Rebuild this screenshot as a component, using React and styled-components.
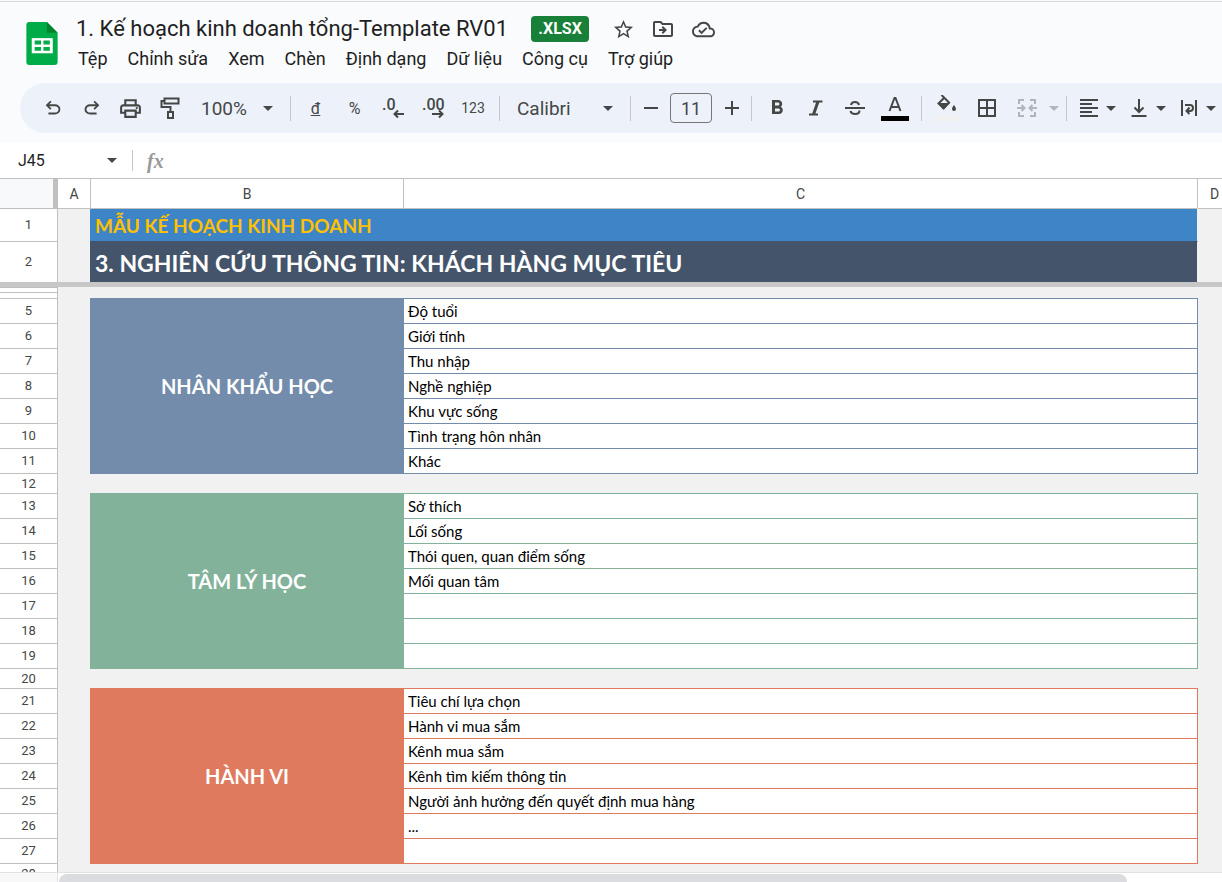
import React from "react";
import styled, { createGlobalStyle, css } from "styled-components";
import {
  MdStarBorder,
  MdOutlineDriveFileMove,
  MdOutlineCloudDone,
  MdFormatBold,
  MdBorderAll,
} from "react-icons/md";

const GlobalStyle = createGlobalStyle`
  *, *::before, *::after { box-sizing: border-box; }
  body { margin: 0; background: #fff; font-family: Roboto, "Liberation Sans", sans-serif; }
  button, input { font: inherit; color: inherit; }
`;

const ink = "#444746";
const line = "#c0c0c0";

const Page = styled.div`
  display: flex;
  flex-direction: column;
  height: 100vh;
  overflow: hidden;
`;

const Header = styled.header`
  flex: none;
  padding-bottom: 10px;
  background: #f9fbfd;
  border-top: 1px solid #f9fbfd;
  box-shadow: inset 0 1px 0 #d5d8dc;
`;

const TitleBar = styled.div`
  display: flex;
  padding: 13px 0 10px 26px;
  gap: 18px;
`;

const Logo = styled.svg`
  width: 32px;
  height: 43px;
  margin-top: 8px;
  flex: none;
`;

const TitleColumn = styled.div`
  min-width: 0;
  white-space: nowrap;
`;

const TitleRow = styled.div`
  display: flex;
  align-items: center;
  height: 30px;
  color: ${ink};
`;

const Title = styled.h1`
  margin: 0 23px 0 0;
  font-size: 22px;
  font-weight: 400;
  line-height: 30px;
  color: #1f1f1f;
`;

const Badge = styled.span`
  width: 58px;
  margin-right: 22px;
  border-radius: 4px;
  background: #188038;
  color: #fff;
  font-size: 16px;
  font-weight: 700;
  line-height: 26px;
  text-align: center;
`;

const TitleButton = styled.button`
  display: grid;
  place-items: center;
  width: 24px;
  height: 24px;
  margin-right: 16px;
  padding: 0;
  border: 0;
  background: none;
`;

const Menu = styled.nav`
  display: flex;
  gap: 20px;
  margin-top: 1px;
  padding-left: 2px;
`;

const MenuItem = styled.button`
  padding: 0;
  border: 0;
  background: none;
  color: #1f1f1f;
  font-size: 18px;
  line-height: 28px;
`;

const Toolbar = styled.div`
  display: flex;
  align-items: center;
  height: 50px;
  margin-left: 20px;
  padding-left: 13px;
  border-radius: 25px 0 0 25px;
  background: #edf2fa;
  color: ${ink};
  overflow: hidden;
`;

const Tool = styled.button`
  display: flex;
  align-items: center;
  justify-content: ${(p) => (p.$menu ? "space-between" : "center")};
  flex: none;
  width: ${(p) => p.$width || 39}px;
  height: 36px;
  padding: ${(p) => p.$pad || "0"};
  border: 0;
  background: none;
  opacity: ${(p) => (p.$faded ? 0.35 : 1)};
  font-size: ${(p) => p.$size || 16}px;

  svg { display: block; flex: none; }
`;

const Separator = styled.span`
  flex: none;
  width: 1px;
  height: 25px;
  margin: 0 5px;
  background: #c7c7c7;
`;

const SizeInput = styled.input`
  flex: none;
  width: 42px;
  height: 30px;
  margin: 0 5px;
  padding: 0;
  border: 1px solid #747775;
  border-radius: 4px;
  background: transparent;
  font-size: 18px;
  text-align: center;
`;

const Swatch = styled.span`
  display: flex;
  justify-content: center;
  align-items: flex-start;
  width: 28px;
  height: 26px;
  border-bottom: 5px solid ${(p) => p.$color};
`;

const FormulaBar = styled.div`
  display: flex;
  align-items: center;
  flex: none;
  height: 35px;
  padding-left: 18px;
`;

const NameBox = styled.input`
  width: 89px;
  padding: 0;
  border: 0;
  outline: 0;
  background: none;
  color: #1f1f1f;
  font-size: 16px;
`;

const NameButton = styled.button`
  display: flex;
  padding: 0;
  border: 0;
  background: none;
  color: ${ink};
`;

const BarDivider = styled.span`
  width: 1px;
  height: 21px;
  margin: 0 14px 0 15px;
  background: #c7c7c7;
`;

const Fx = styled.span`
  color: #999;
  font: italic 700 20px/24px "Liberation Serif", serif;
`;

const Grid = styled.main`
  flex: 1;
  min-height: 0;
  overflow: hidden;
  border-top: 1px solid ${line};
  background: #f1f1f1;
`;

/* Column D runs on past the right edge of the window. */
const Sheet = styled.table`
  width: calc(100% + 9px);
  table-layout: fixed;
  border-collapse: separate;
  border-spacing: 0;

  th, td { padding: 0; }
`;

const ColumnHead = styled.th`
  height: 29px;
  border: solid ${line};
  border-width: ${(p) => p.$lines || "0"};
  background: #fff;
  color: ${ink};
  font-size: 14px;
  font-weight: 400;
`;

const CornerHead = styled.td`
  border-right: 5px solid ${line};
  background: #f8f9fa;
`;

const RowHead = styled.th`
  height: ${(p) => p.$height}px;
  border-top: 1px solid ${line};
  border-right: 1px solid ${line};
  background: #fff;
  color: ${ink};
  font-size: 13px;
  font-weight: 400;
  line-height: ${(p) => (p.$height < 12 ? 0 : 16)}px;
`;

const Blank = styled.td`
  border-top: 1px solid ${(p) => p.$edge || "#f1f1f1"};
`;

const sheetFont = css`
  font-family: Lato, "Liberation Sans", sans-serif;
`;

const Banner = styled.td`
  ${sheetFont}
  border-top: 1px solid ${(p) => p.$edge};
  border-right: 1px solid #f1f1f1;
  background: ${(p) => p.$fill} padding-box;

  && { padding: 2px 0 0 5px; }

  color: ${(p) => p.$color};
  font-size: ${(p) => p.$size}px;
  font-weight: 700;
  line-height: 28px;
  white-space: nowrap;
`;

const FreezeBar = styled.td`
  height: 5px;
  background: #c7c7c7;
`;

const GroupCell = styled.td`
  ${sheetFont}
  background: ${(p) => p.$fill};
  color: #fff;
  font-size: 20px;
  font-weight: 700;
  text-align: center;
`;

const ItemCell = styled.td`
  ${sheetFont}
  border-top: 1px solid ${(p) => p.$edge};
  border-right: 1px solid ${(p) => p.$edge};
  background: #fff;
  color: #000;
  font-size: 15px;
  line-height: 20px;
  white-space: nowrap;

  && { padding: 0 0 0 4px; }
`;

const ScrollTrack = styled.div`
  display: flex;
  flex: none;
  height: 10px;
  border-top: 1px solid #e1e1e1;
  background: #fff;
`;

const ScrollCorner = styled.div`
  width: 58px;
  border-right: 1px solid #e1e1e1;
  background: #f8f8f8;
`;

const ScrollLane = styled.div`
  flex: 1;
  padding: 1px 95px 0 1px;
`;

const ScrollThumb = styled.div`
  height: 16px;
  border-radius: 8px;
  background: #dadce0;
`;

const Caret = () => (
  <svg width="10" height="5" viewBox="0 0 10 5" fill="currentColor" aria-hidden="true">
    <path d="M0 0h10L5 5z" />
  </svg>
);

const Symbol = ({ d, size = 20 }) => (
  <svg width={size} height={size} viewBox="0 -960 960 960" fill="currentColor" aria-hidden="true">
    <path d={d} />
  </svg>
);

const Stroke = ({ children, size = 24, width = 2 }) => (
  <svg width={size} height={size} viewBox={`0 0 ${size} ${size}`} fill="none" stroke="currentColor" strokeWidth={width} aria-hidden="true">
    {children}
  </svg>
);

const undoPath =
  "M280-200v-80h284q63 0 109.500-40T720-420q0-60-46.500-100T564-560H312l104 104-56 56-200-200 200-200 56 56-104 104h252q97 0 169.500 63T800-420q0 94-72.500 157T564-200H280Z";
const redoPath =
  "M396-200q-97 0-169.500-63T154-420q0-94 72.500-157T396-640h252L544-744l56-56 200 200-200 200-56-56 104-104H396q-63 0-109.500 40T240-420q0 60 46.500 100T396-280h284v80H396Z";
const printPath =
  "M640-640v-120H320v120h-80v-200h480v200h-80ZM720-460q17 0 28.500-11.500T760-500q0-17-11.500-28.500T720-540q-17 0-28.500 11.500T680-500q0 17 11.500 28.500T720-460Zm-80 260v-160H320v160h320Zm80 80H240v-160H80v-240q0-51 35-85.500t85-34.500h560q51 0 85.500 34.500T880-520v240H720v160Zm80-240v-160q0-17-11.500-28.500T760-560H200q-17 0-28.500 11.500T160-520v160h80v-80h480v80h80Z";

const DecimalIcon = ({ digits, right }) => (
  <svg width="28" height="32" viewBox="0 0 28 32" aria-hidden="true">
    <text x={right ? 3 : 2} y="18" fontFamily="Roboto, sans-serif" fontSize="16" fontWeight="500" fill="currentColor">
      {digits}
    </text>
    <path
      d={right ? "M13 22h10M20 18.500l3.500 3.500-3.500 3.500" : "M24 22H14M18 18.500L14.500 22l3.500 3.500"}
      fill="none"
      stroke="currentColor"
      strokeWidth="2"
    />
  </svg>
);

const menus = ["Tệp", "Chỉnh sửa", "Xem", "Chèn", "Định dạng", "Dữ liệu", "Công cụ", "Trợ giúp"];

const groups = [
  {
    name: "NHÂN KHẨU HỌC",
    fill: "#738cab",
    start: 5,
    items: ["Độ tuổi", "Giới tính", "Thu nhập", "Nghề nghiệp", "Khu vực sống", "Tình trạng hôn nhân", "Khác"],
  },
  {
    name: "TÂM LÝ HỌC",
    fill: "#82b29a",
    start: 13,
    items: ["Sở thích", "Lối sống", "Thói quen, quan điểm sống", "Mối quan tâm", "", "", ""],
  },
  {
    name: "HÀNH VI",
    fill: "#df7a5e",
    start: 21,
    items: [
      "Tiêu chí lựa chọn",
      "Hành vi mua sắm",
      "Kênh mua sắm",
      "Kênh tìm kiếm thông tin",
      "Người ảnh hưởng đến quyết định mua hàng",
      "...",
      "",
    ],
  },
];

const GroupRows = ({ group }) => (
  <tbody>
    {group.items.map((text, i) => (
      <tr key={group.start + i}>
        <RowHead scope="row" $height={25}>{group.start + i}</RowHead>
        <td />
        {i === 0 && (
          <GroupCell rowSpan={group.items.length} $fill={group.fill}>{group.name}</GroupCell>
        )}
        <ItemCell $edge={group.fill}>{text}</ItemCell>
        <td />
      </tr>
    ))}
    <tr>
      <RowHead scope="row" $height={20}>{group.start + 7}</RowHead>
      <Blank />
      <Blank $edge={group.fill} />
      <Blank $edge={group.fill} />
      <Blank />
    </tr>
  </tbody>
);

/* The row after the last group is its number 28, cut by the scroll bar. */
export default function App() {
  return (
    <Page>
      <GlobalStyle />
      <Header>
        <TitleBar>
          <Logo viewBox="0 0 32 44" aria-hidden="true">
            <path d="M3 0h18l11 11v30a3 3 0 0 1-3 3H3a3 3 0 0 1-3-3V3a3 3 0 0 1 3-3z" fill="#00ac47" />
            <path d="M21 0l11 11H21z" fill="#00832d" />
            <path d="M5.500 16.500h21.500v15.500H5.500z" fill="#fff" />
            <path d="M8.500 19h6.500v4H8.500zM17.500 19h6.500v4h-6.500zM8.500 25.500h6.500v4H8.500zM17.500 25.500h6.500v4h-6.500z" fill="#00ac47" />
          </Logo>
          <TitleColumn>
            <TitleRow>
              <Title>1. Kế hoạch kinh doanh tổng-Template RV01</Title>
              <Badge>.XLSX</Badge>
              <TitleButton aria-label="Gắn dấu sao"><MdStarBorder size={23} /></TitleButton>
              <TitleButton aria-label="Di chuyển"><MdOutlineDriveFileMove size={24} /></TitleButton>
              <TitleButton aria-label="Trạng thái tài liệu"><MdOutlineCloudDone size={23} /></TitleButton>
            </TitleRow>
            <Menu>
              {menus.map((m) => <MenuItem key={m}>{m}</MenuItem>)}
            </Menu>
          </TitleColumn>
        </TitleBar>
        <Toolbar role="toolbar">
          <Tool aria-label="Hủy"><Symbol d={undoPath} size={22} /></Tool>
          <Tool aria-label="Làm lại"><Symbol d={redoPath} size={22} /></Tool>
          <Tool aria-label="In"><Symbol d={printPath} size={25} /></Tool>
          <Tool aria-label="Sao chép định dạng">
            <Stroke>
              <path d="M6.500 2.500h14v5h-14zM6.500 5H3.500v6h9v5M10 16h5v6h-5z" />
            </Stroke>
          </Tool>
          <Tool $width={96} $menu $pad="0 12px" $size={19}>100% <Caret /></Tool>
          <Separator />
          <Tool><u>đ</u></Tool>
          <Tool>%</Tool>
          <Tool aria-label="Giảm số thập phân"><DecimalIcon digits=".0" /></Tool>
          <Tool aria-label="Tăng số thập phân"><DecimalIcon digits=".00" right /></Tool>
          <Tool $width={42} $size={14}>123</Tool>
          <Separator />
          <Tool $width={120} $menu $pad="0 12px" $size={19}>Calibri <Caret /></Tool>
          <Separator />
          <Tool $width={29} aria-label="Giảm cỡ chữ"><Stroke size={14}><path d="M0 7h14" /></Stroke></Tool>
          <SizeInput aria-label="Cỡ chữ" defaultValue="11" />
          <Tool $width={29} aria-label="Tăng cỡ chữ"><Stroke size={14}><path d="M0 7h14M7 0v14" /></Stroke></Tool>
          <Separator />
          <Tool aria-label="In đậm"><MdFormatBold size={24} /></Tool>
          <Tool aria-label="In nghiêng">
            <Stroke size={20}>
              <path d="M7 3.500h9.500M3 16.500h9" />
              <path d="M12 3.500L7.500 16.500" strokeWidth="3" />
            </Stroke>
          </Tool>
          <Tool aria-label="Gạch ngang">
            <Stroke size={20}>
              <path d="M0 10h20M14 7C13.500 5 12.500 4 10 4S6.300 5 6 7M5.500 13c.5 2.200 2 3 4.500 3s4.500-1 4.500-3.500" />
            </Stroke>
          </Tool>
          <Tool $width={42} aria-label="Màu văn bản">
            <Swatch $color="#000">
              <Stroke size={20}><path d="M4.500 16L9.500 3h1l5 13M6.500 12h7" /></Stroke>
            </Swatch>
          </Tool>
          <Separator />
          <Tool aria-label="Màu nền">
            <Swatch $color="#f1f1f1">
              <svg width="20" height="20" viewBox="0 0 20 20" aria-hidden="true">
                <path d="M4.500 0l7.500 7.500-5.500 5.500L1.500 8.500l5.500-5.500" fill="none" stroke="currentColor" strokeWidth="2" />
                <path d="M1 8h12l-6 6.500h-1zM17 10s-2 2.500-2 4a2 2 0 0 0 4 0c0-1.500-2-4-2-4z" fill="currentColor" />
              </svg>
            </Swatch>
          </Tool>
          <Tool $width={42} aria-label="Đường viền"><MdBorderAll size={24} /></Tool>
          <Tool $width={53} $menu $pad="0 2px 0 9px" $faded aria-label="Hợp nhất ô">
            <Stroke size={20}>
              <path d="M7 2H2v4M2 14v4h5M13 2h5v4M18 14v4h-5M0 10h7M4.500 7l3 3-3 3M20 10h-7M15.500 7l-3 3 3 3" />
            </Stroke>
            <Caret />
          </Tool>
          <Separator />
          <Tool $width={50} $menu $pad="0 6px 0 7px" aria-label="Căn ngang">
            <Stroke size={20}><path d="M1 2h18M1 6h12M1 10h18M1 14h12M1 18h18" /></Stroke>
            <Caret />
          </Tool>
          <Tool $width={50} $menu $pad="0 6px 0 7px" aria-label="Căn dọc">
            <Stroke size={20}><path d="M10 1v13M5.500 9.500L10 14l4.500-4.500M2.500 18h15" /></Stroke>
            <Caret />
          </Tool>
          <Tool $width={50} $menu $pad="0 6px 0 7px" aria-label="Xuống dòng">
            <Stroke size={20}><path d="M3 2v16M17 2v16M6 7h5a3 3 0 0 1 0 6H8M10.500 9.500L7.500 13l3 3" /></Stroke>
            <Caret />
          </Tool>
        </Toolbar>
      </Header>
      <FormulaBar>
        <NameBox aria-label="Hộp tên" defaultValue="J45" />
        <NameButton aria-label="Mở hộp tên"><Caret /></NameButton>
        <BarDivider />
        <Fx>fx</Fx>
      </FormulaBar>
      <Grid>
        <Sheet>
          <colgroup>
            <col width="58" />
            <col width="32" />
            <col width="314" />
            <col />
            <col width="33" />
          </colgroup>
          <thead>
            <tr>
              <CornerHead />
              <ColumnHead scope="col">A</ColumnHead>
              <ColumnHead scope="col" $lines="0 1px">B</ColumnHead>
              <ColumnHead scope="col" $lines="0 1px 0 0">C</ColumnHead>
              <ColumnHead scope="col">D</ColumnHead>
            </tr>
          </thead>
          <tbody>
            <tr>
              <RowHead scope="row" $height={33}>1</RowHead>
              <Blank $edge={line} />
              <Banner colSpan={2} $fill="#3d85c6" $edge={line} $color="#ffc000" $size={19}>MẪU KẾ HOẠCH KINH DOANH</Banner>
              <Blank $edge={line} />
            </tr>
            <tr>
              <RowHead scope="row" $height={41}>2</RowHead>
              <td />
              <Banner colSpan={2} $fill="#44546a" $edge="#44546a" $color="#fff" $size={23}>
                3. NGHIÊN CỨU THÔNG TIN: KHÁCH HÀNG MỤC TIÊU
              </Banner>
              <td />
            </tr>
            <tr><FreezeBar colSpan={5} /></tr>
            <tr><RowHead $height={5} /><td colSpan={4} /></tr>
            <tr><RowHead $height={6} /><td colSpan={4} /></tr>
          </tbody>
          {groups.map((g) => <GroupRows key={g.start} group={g} />)}
        </Sheet>
      </Grid>
      <ScrollTrack>
        <ScrollCorner />
        <ScrollLane><ScrollThumb /></ScrollLane>
      </ScrollTrack>
    </Page>
  );
}
